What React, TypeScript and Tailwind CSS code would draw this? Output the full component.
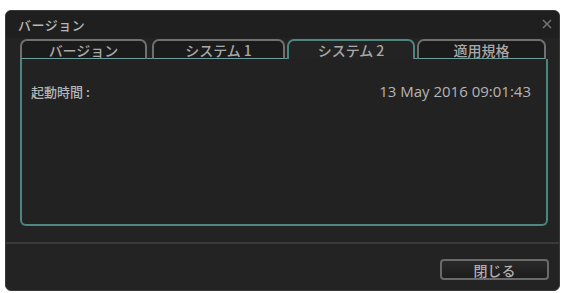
import React from 'react';

const jp = { fontFamily: '"Noto Sans CJK JP", "Noto Sans", sans-serif' };

const tabs = [
  { label: 'バージョン', w: 'w-[127px]' },
  { label: 'システム 1', w: 'w-[133px]' },
  { label: 'システム 2', w: 'w-[128px]', active: true },
  { label: '適用規格', w: 'w-[129px]' },
];

export default function App() {
  return (
    <div className="w-[562px] h-[293px] bg-white pt-[10px] pl-[5px] pr-[2px] pb-[2px]" style={jp}>
      <div className="w-[555px] h-[281px] flex flex-col rounded-[6px] bg-[#232323] border border-[#3a3a3a] overflow-hidden">
        {/* title bar */}
        <div className="h-[27px] flex items-center justify-between pl-[12px] pr-[7px] bg-[#1f1f1f]">
          <span className="text-[13px] font-medium leading-none text-[#b8b8b8] tracking-[0.5px]">バージョン</span>
          <svg width="10" height="10" viewBox="0 0 10 10" className="mb-[2px]">
            <path d="M1 1L9 9M9 1L1 9" stroke="#7a7a7a" strokeWidth="1.4" />
          </svg>
        </div>

        <div className="pl-[14px] pr-[11px] pt-[1px]">
          {/* tabs */}
          <div className="flex h-[20px]">
            {tabs.map((t, i) => (
              <React.Fragment key={t.label}>
                {i > 0 && (
                  <div
                    className={
                      tabs[i].active || tabs[i - 1].active
                        ? 'w-[2px] border-b border-[#6d9e9b]'
                        : 'w-[5px] border-b border-[#6d9e9b]'
                    }
                  />
                )}
                <div
                  className={
                    t.active
                      ? `${t.w} flex items-center justify-center rounded-t-[7px] border-t-2 border-x-2 border-[#4d8580] bg-[#232323] text-[14px] font-medium text-[#a8a8a8]`
                      : `${t.w} flex items-center justify-center rounded-t-[7px] border-t-2 border-x-2 border-b border-t-[#707070] border-x-[#707070] border-b-[#6d9e9b] bg-[#1b1b1b] text-[14px] font-medium text-[#a8a8a8]`
                  }
                >
                  <span className="leading-none">{t.label}</span>
                </div>
              </React.Fragment>
            ))}
          </div>

          {/* panel */}
          <div className="h-[167px] border-x-2 border-b-2 border-[#4d8580] rounded-b-[6px] bg-[#222222] pl-[9px] pr-[15px] pt-[21px]">
            <div className="flex justify-between items-center">
              <span className="text-[13px] font-medium text-[#b5b5b5]">起動時間 :</span>
              <span
                className="text-[15px] text-[#b5b5b5]"
                style={{ fontFamily: '"Open Sans", "Liberation Sans", sans-serif' }}
              >
                13 May 2016 09:01:43
              </span>
            </div>
          </div>
        </div>

        {/* separator */}
        <div className="mt-[16px] h-[2px] bg-[#3a3a3a]" />

        {/* footer */}
        <div className="flex-1 flex justify-end items-start pt-[15px] pr-[10px]">
          <button className="w-[109px] h-[21px] rounded-[4px] border-2 border-[#6a6a6a] bg-gradient-to-b from-[#2a2a2a] to-[#1c1c1c] flex items-center justify-center text-[14px] font-medium text-[#b0b0b0] leading-none">
            閉じる
          </button>
        </div>
      </div>
    </div>
  );
}
